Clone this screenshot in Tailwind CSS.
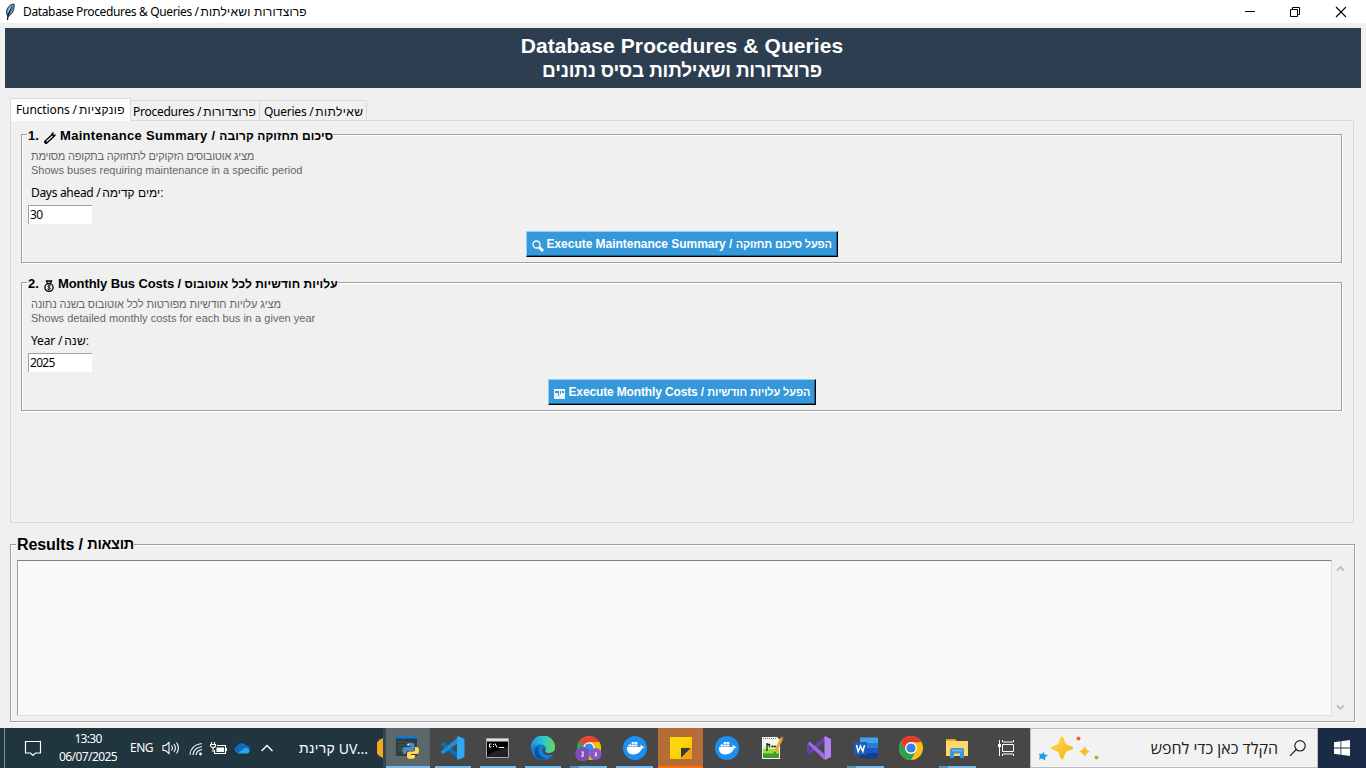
<!DOCTYPE html>
<html lang="en">
<head>
<meta charset="utf-8">
<title>Database Procedures &amp; Queries</title>
<script src="https://cdn.jsdelivr.net/npm/@tailwindcss/browser@4"></script>
</head>
<body class="flex h-[768px] w-[1366px] flex-col overflow-hidden bg-[#f0f0f0] font-['Noto_Sans','Open_Sans',sans-serif] text-[12px] text-black">

<!-- Title bar -->
<header class="flex h-[23px] shrink-0 items-center bg-white pl-[4px] whitespace-pre">
  <svg class="mr-[7px] h-[18px] w-[12px]" viewBox="0 0 12 18"><path d="M4 13.500C1 9 3 4 7.500 1.500L10 1C10.500 5 9.500 10 4.500 13.500Z" fill="#5e9bd6" stroke="#1c2733" stroke-width="1"/><path d="M8 3 4 12.500 3.500 17" fill="none" stroke="#111" stroke-width="1.200"/><path d="M7.500 3 4 9" stroke="#d3e6f7" stroke-width=".8"/></svg>
  <span class="tracking-[-0.36px]">Database Procedures &amp; Queries / </span><span class="-ml-px font-['Liberation_Sans',sans-serif] tracking-[0.21px]">פרוצדורות ושאילתות</span>
  <div class="ml-auto flex items-center pr-[19px]">
    <svg class="mr-[34px] size-[12px]" viewBox="0 0 12 12"><path d="M2 5.500h10" stroke="#000"/></svg>
    <svg class="mr-[34px] size-[12px]" viewBox="0 0 12 12" fill="none" stroke="#000"><path d="M1.500 3.500h7v7h-7zM3.500 3V1.500h7v7H9"/></svg>
    <svg class="size-[12px]" viewBox="0 0 12 12"><path d="M1 1l10 10M11 1 1 11" stroke="#000" stroke-width="1.100"/></svg>
  </div>
</header>

<!-- Banner -->
<div class="mx-[5px] mt-[5px] flex h-[60px] shrink-0 flex-col items-center bg-[#2c3e50] pt-[5px] pr-[2px] font-['Liberation_Sans',sans-serif] font-bold text-white">
  <div class="text-[21px] leading-[25px] tracking-[0.1px]">Database Procedures &amp; Queries</div>
  <div class="pt-px text-[19px] leading-[24px] tracking-[-0.19px]">פרוצדורות ושאילתות בסיס נתונים</div>
</div>

<!-- Notebook tabs -->
<nav class="ml-[10px] mt-[10px] flex h-[23px] shrink-0 items-end whitespace-pre">
  <div class="relative z-10 flex h-[23px] w-[121px] items-center border border-b-0 border-[#d9d9d9] bg-white pl-[5px]"><span class="tracking-[-0.12px]">Functions / </span><span class="-ml-px font-['Liberation_Sans',sans-serif] tracking-[0.37px]">פונקציות</span></div>
  <div class="flex h-[21px] w-[129px] items-center border-y border-r border-[#d9d9d9] pt-[2px] pl-[2px]"><span class="tracking-[-0.26px]">Procedures / </span><span class="-ml-px font-['Liberation_Sans',sans-serif] tracking-[0.22px]">פרוצדורות</span></div>
  <div class="flex h-[21px] w-[107px] items-center border-y border-r border-[#d9d9d9] pt-[2px] pl-[4px]"><span class="tracking-[-0.25px]">Queries / </span><span class="-ml-px font-['Liberation_Sans',sans-serif] tracking-[0.4px]">שאילתות</span></div>
</nav>

<!-- Functions page -->
<main class="-mt-px ml-[10px] flex h-[403px] w-[1344px] shrink-0 flex-col gap-[11px] border border-[#d9d9d9] px-[10px] pt-[5px] pr-[11px]">
  <fieldset class="h-[137px] border border-[#a0a0a0] pl-[6px] shadow-[1px_1px_0_white,inset_1px_1px_0_white]">
    <legend class="-ml-px flex h-[17px] items-center bg-[#f0f0f0] pt-[2px] font-['Liberation_Sans',sans-serif] text-[13px] font-bold whitespace-pre">
      <span class="w-[17px] pl-px">1.</span><svg class="mt-[4px] mr-[4px] size-[12px]" viewBox="0 0 12 12"><path d="M2 10 8.500 4" fill="none" stroke="#000" stroke-width="3.800" stroke-linecap="round"/><path d="M8 3.500V2l1.500-1.500M8.500 4H10l1.500-1.500" fill="none" stroke="#000" stroke-width="1.500"/><path d="M2.500 9.500 8.500 4" stroke="#e8e8e8" stroke-width="1.300"/></svg><span class="tracking-[0.31px]">Maintenance Summary / </span><span class="text-[12px] tracking-[0.08px]">סיכום תחזוקה קרובה</span>
    </legend>
    <div class="pt-[6px] pl-[3px] font-['Liberation_Sans',sans-serif] text-[11px] leading-[14px] text-[#666666]">
      <p class="tracking-[-0.2px]">מציג אוטובוסים הזקוקים לתחזוקה בתקופה מסוימת</p>
      <p>Shows buses requiring maintenance in a specific period</p>
    </div>
    <label class="mt-[8px] flex h-[16px] items-center pl-[3px] whitespace-pre"><span class="tracking-[-0.31px]">Days ahead / </span><span class="-ml-px font-['Liberation_Sans',sans-serif]">ימים קדימה:</span></label>
    <div class="mt-[4px] flex h-[19px] w-[64px] items-center border-t border-l border-[#a0a0a0] bg-white pl-px tracking-[-0.7px]">30</div>
    <button class="mx-auto mt-[7px] flex h-[26px] w-[312px] -translate-x-[3px] items-center border border-t-[#8fd0ff] border-r-black border-b-black border-l-[#8fd0ff] bg-[#3498db] pl-[5px] font-['Liberation_Sans',sans-serif] font-bold whitespace-pre text-white shadow-[inset_-1px_-1px_0_#1c5f8c]">
      <svg class="mt-[3px] mr-[4px] size-[12px]" viewBox="0 0 12 12" fill="none" stroke="#fff"><circle cx="4.500" cy="4.500" r="3.500" stroke-width="1.300"/><path d="m7 7 4 4" stroke-width="3"/></svg><span class="-ml-px tracking-[-0.03px]">Execute Maintenance Summary / </span><span class="text-[11px] tracking-[-0.2px]">הפעל סיכום תחזוקה</span>
    </button>
  </fieldset>

  <fieldset class="h-[137px] border border-[#a0a0a0] pl-[6px] shadow-[1px_1px_0_white,inset_1px_1px_0_white]">
    <legend class="-ml-px flex h-[17px] items-center bg-[#f0f0f0] pt-[2px] font-['Liberation_Sans',sans-serif] text-[13px] font-bold whitespace-pre">
      <span class="w-[17px] pl-px">2.</span><svg class="mt-[4px] mr-[4px] h-[12px] w-[10px]" viewBox="0 0 10 12" fill="none" stroke="#000"><path d="M2.500 1h5l-1 2.500h-3z" stroke-width="1.300"/><ellipse cx="5" cy="7.500" rx="4.100" ry="3.800" stroke-width="1.300"/><path d="M6.500 6C5.500 5 3.500 5.500 4 6.800 4.500 8 6.500 7.300 6.300 8.600 6 9.700 4.300 9.500 3.500 8.900M5 5v5.500" stroke-width=".9"/></svg><span class="tracking-[-0.1px]">Monthly Bus Costs / </span><span class="text-[12px] tracking-[0.06px]">עלויות חודשיות לכל אוטובוס</span>
    </legend>
    <div class="pt-[6px] pl-[3px] font-['Liberation_Sans',sans-serif] text-[11px] leading-[14px] text-[#666666]">
      <p class="tracking-[-0.08px]">מציג עלויות חודשיות מפורטות לכל אוטובוס בשנה נתונה</p>
      <p class="tracking-[0.02px]">Shows detailed monthly costs for each bus in a given year</p>
    </div>
    <label class="mt-[8px] flex h-[16px] items-center pl-[3px] whitespace-pre"><span class="tracking-[-0.15px]">Year / </span><span class="-ml-px font-['Liberation_Sans',sans-serif] tracking-[0.15px]">שנה:</span></label>
    <div class="mt-[4px] flex h-[19px] w-[64px] items-center border-t border-l border-[#a0a0a0] bg-white pl-px tracking-[-0.7px]">2025</div>
    <button class="mx-auto mt-[7px] flex h-[26px] w-[268px] -translate-x-[3px] items-center border border-t-[#8fd0ff] border-r-black border-b-black border-l-[#8fd0ff] bg-[#3498db] pl-[5px] font-['Liberation_Sans',sans-serif] font-bold whitespace-pre text-white shadow-[inset_-1px_-1px_0_#1c5f8c]">
      <svg class="mt-[3px] mr-[4px] h-[11px] w-[11px]" viewBox="0 0 11 11"><path d="M0 1h11v10H0z" fill="#e8f4fc"/><path d="M1 3h3v2H1zM4 3h1v5H4zM6 3h1v3H6zM8 3h2v2H8z" fill="#3498db"/><path d="M0 1h11v1H0z" fill="#fff"/></svg><span class="tracking-[-0.14px]">Execute Monthly Costs / </span><span class="text-[11px] tracking-[-0.13px]">הפעל עלויות חודשיות</span>
    </button>
  </fieldset>
</main>

<!-- Results -->
<fieldset class="mt-[12px] ml-[10px] h-[187px] w-[1345px] shrink-0 border border-[#a0a0a0] pl-[6px] shadow-[1px_1px_0_white,inset_1px_1px_0_white]">
  <legend class="-ml-px flex h-[19px] items-center bg-[#f0f0f0] pt-px pl-px font-['Liberation_Sans',sans-serif] text-[16px] font-bold whitespace-pre"><span class="tracking-[-0.08px]">Results / </span><span class="text-[14.500px] tracking-[-0.3px]">תוצאות</span></legend>
  <div class="mt-[6px] flex h-[156px]">
    <div class="w-[1315px] border border-t-[#808080] border-r-[#dcdcdc] border-b-[#dcdcdc] border-l-[#a0a0a0] bg-[#f8f9fa]"></div>
    <div class="flex w-[17px] flex-col items-center justify-between py-[5px]">
      <svg class="h-[7px] w-[9px]" viewBox="0 0 9 7"><path d="m1 5.500 3.500-3.500L8 5.500" fill="none" stroke="#bfbfbf" stroke-width="1.800"/></svg>
      <svg class="h-[7px] w-[9px]" viewBox="0 0 9 7"><path d="m1 1.500 3.500 3.500L8 1.500" fill="none" stroke="#bfbfbf" stroke-width="1.800"/></svg>
    </div>
  </div>
</fieldset>

<!-- Taskbar -->
<footer class="mt-auto flex h-[40px] shrink-0 items-stretch bg-[#474747] text-white">
  <div class="flex w-[386px] items-center bg-linear-to-r from-[#20363e] to-[#21353f]">
    <div class="ml-[4px] h-full w-px bg-[#84908f]"></div>
    <svg class="ml-[19px] size-[18px]" viewBox="0 0 18 18" fill="none" stroke="#fff" stroke-width="1.200"><path d="M1.500 2.500h15v11.500h-5L9 16.500 6.500 14h-5z"/></svg>
    <div class="ml-[15px] flex w-[62px] flex-col items-center text-[12px] leading-[18px]"><span class="tracking-[-0.72px]">13:30</span><span class="tracking-[-0.57px]">06/07/2025</span></div>
    <div class="ml-[11px] w-[24px] tracking-[-0.48px]">ENG</div>
    <svg class="ml-[8px] h-[16px] w-[18px]" viewBox="0 0 18 16" fill="none" stroke="#fff" stroke-width="1.100"><path d="M1 5.500h2.500L7 2.500v11l-3.500-3H1z"/><path d="M9.500 5.500q1.800 2.500 0 5M12 4q2.800 4 0 8M14.500 2.500q3.800 5.500 0 11"/></svg>
    <svg class="ml-[9px] size-[15px]" viewBox="0 0 15 15" fill="none" stroke="#fff" stroke-width="1.100"><path d="M1 14Q1.500 4 13 2.500" opacity=".8"/><path d="M4 14Q4.500 7 13 5.500M7 14Q7.500 9.500 13 8.500"/><circle cx="11.500" cy="13" r="1.400" fill="#fff" stroke="none"/></svg>
    <svg class="ml-[6px] h-[15px] w-[17px]" viewBox="0 0 17 15" fill="none" stroke="#fff" stroke-width="1.100"><path d="M7 4.500h8.500v8h-11V9M16.500 7v3"/><path d="M7 7h6.500v3.500H7z" fill="#fff"/><path d="M1.500 1v2M4.500 1v2M.5 3.500h5v1q0 2-2.500 2T.5 4.500zM3 6.500v4.500"/></svg>
    <svg class="ml-[7px] h-[12px] w-[17px]" viewBox="0 0 17 12"><path d="M3.500 11A3.500 3.500 0 0 1 3 4.200 5 5 0 0 1 12 3.500 4 4 0 0 1 14 11z" fill="#0f6cbd"/><path d="M3.500 11.500 11 6A3.200 3.200 0 0 1 14 11.500z" fill="#28a8ea"/></svg>
    <svg class="ml-[9px] h-[8px] w-[14px]" viewBox="0 0 14 8"><path d="m1.500 7 5.500-5.500L12.500 7" fill="none" stroke="#fff" stroke-width="1.400"/></svg>
    <div class="ml-[25px] flex w-[69px] items-center text-[14px] whitespace-pre"><span class="font-['Liberation_Sans',sans-serif] tracking-[0.3px]">קרינת</span><span class="tracking-[0.05px]"> UV...</span></div>
    <svg class="ml-[9px] h-[20px] w-[6px] shrink-0" viewBox="0 0 6 20"><path d="M6 0v20A10.500 10.500 0 0 1 6 0" fill="#f5a623"/></svg>
    <div class="ml-auto h-full w-[3px] bg-[#34474f]"></div>
  </div>

  <!-- Python -->
  <div class="flex w-[44px] items-center justify-center border-b-2 border-[#76b9ed] bg-[#5c6769]">
    <svg class="mt-[2px] h-[26px] w-[26px]" viewBox="0 0 26 26"><path d="M1 2h21v19H1z" fill="#333b40"/><path d="M1 1h21v2.500H1z" fill="#0a7bd0"/><path d="M3 7h4M8 7h4M3 10h7M3 13h5M3 16h6" stroke="#3c6a42" stroke-width="1.200"/><path d="M11.500 11V10q0-2.500 4-2.500t4 2.500v4q0 2-2 2h-4q-2.500 0-2.500 3H10q-2.500 0-2.500-3.500t2.500-3.500h5.500V11z" fill="#4b8bc8"/><path d="M20 12h1.500q2.500 0 2.500 3.500t-2.500 3.500H16v1h4v1.500q0 2.500-4 2.500t-4-2.500V18.500q0-2 2-2h4q2 0 2-2.500z" fill="#ffd94d"/><circle cx="13.300" cy="9.500" r=".8" fill="#fff"/><circle cx="18" cy="22" r=".8" fill="#fff"/></svg>
  </div>
  <!-- VS Code -->
  <div class="flex w-[45px] flex-col items-center"><div class="flex h-[38px] items-center pt-[2px]"><svg class="size-[24px]" viewBox="0 0 24 24"><path d="M0 7.500 2.500 6 18 18v5.500L0 9z" fill="#0a70b8"/><path d="M0 16.500 2.500 18 18 6V.5L0 15z" fill="#1a8fd6"/><path d="M17 0l6.500 3v18L17 24l-1-1.500V1.500z" fill="#32a8f0"/></svg></div><div class="h-[2px] w-[36px] bg-[#76b9ed]"></div></div>
  <!-- Command prompt -->
  <div class="flex w-[45px] flex-col items-center"><div class="flex h-[38px] items-center pt-[2px]"><svg class="h-[20px] w-[23px]" viewBox="0 0 23 20"><path d="M.5.5h22v19H.5z" fill="#000" stroke="#aaa"/><path d="M1 1h21v2.500H1z" fill="#ddd"/><path d="M3 16 22 8v11H1z" fill="#222"/><path d="M5.500 6H3.500v3h2M7.500 6v1M7.500 8v1M9 5.500l2 4M13 9.500h5" fill="none" stroke="#fff"/></svg></div><div class="h-[2px] w-[36px] bg-[#76b9ed]"></div></div>
  <!-- Edge -->
  <div class="flex w-[46px] flex-col items-center"><div class="flex h-[38px] items-center pt-[2px]"><svg class="size-[24px]" viewBox="0 0 24 24"><defs><linearGradient id="eg"><stop offset="0" stop-color="#1e95e0"/><stop offset=".5" stop-color="#2fc2cf"/><stop offset="1" stop-color="#62dc55"/></linearGradient></defs><circle cx="12" cy="12" r="12" fill="#1380d2"/><path d="M0 11A12 12 0 0 1 24 11.500c0 4-3.500 5.500-6.500 5.500-3.500 0-4-1.500-3-3 1.500-2.500-.5-5.500-4-5.500C6 8 2 9 0 13z" fill="url(#eg)"/><path d="M8.500 10c-3.500 5 0 12 8 12.500A12 12 0 0 1 6 22C2 17 3 11 8.500 10z" fill="#0b4f9e"/><path d="M12 12.500c.5-1 2.500-.5 2.500 1.500-1 1.500-.5 3 3 3 2 0 4-.5 6.500-2.500l-.8 3q-3 2-6.500 1.800c-4-.3-6-3.500-4.700-6.800z" fill="#474747"/></svg></div><div class="h-[2px] w-[36px] bg-[#76b9ed]"></div></div>
  <!-- Chrome with profile badges -->
  <div class="flex w-[45px] flex-col items-center"><div class="flex h-[38px] items-center pt-[2px]"><svg class="h-[25px] w-[27px]" viewBox="0 0 27 25"><circle cx="14" cy="12" r="12" fill="#2da94f"/><path d="M14 12 3.600 6A12 12 0 0 1 24.400 6z" fill="#ea4335"/><path d="M14 12V6h10.400A12 12 0 0 1 14 24z" fill="#fbbc05"/><circle cx="14" cy="12" r="5.800" fill="#fff"/><circle cx="14" cy="12" r="4.500" fill="#4285f4"/><circle cx="20.500" cy="18" r="6" fill="#8659c5"/><circle cx="7.500" cy="18" r="7.300" fill="#7a4fb8"/><path d="M6.500 16H8v4H6M20 17h1.200v2.700h-1.500" fill="none" stroke="#fff" stroke-width="1.100"/></svg></div><div class="flex h-[2px] w-[37px] bg-[#76b9ed]"><div class="w-[9px] bg-[#5b8fb5]"></div></div></div>
  <!-- Docker -->
  <div class="flex w-[47px] flex-col items-center"><div class="flex h-[38px] items-center pt-[2px]"><svg class="size-[24px]" viewBox="0 0 24 24"><circle cx="12" cy="12" r="12" fill="#1d8fee"/><path d="M4 11h13.500q.5-1 0-2.500 1.500.7 1.800 2 1.200-.3 2.200.3-.7 1.500-2.500 1.500C17.500 16.500 14.500 18.500 10.500 18.500 5.500 18.500 3.500 15.500 4 11zM5.500 8.500h2.700v2H5.500zM8.600 8.500h2.700v2H8.600zM11.700 8.500h2.700v2h-2.700zM8.600 6h2.700v2H8.600zM11.700 6h2.700v2h-2.700z" fill="#fff"/></svg></div><div class="h-[2px] w-[37px] bg-[#76b9ed]"></div></div>
  <!-- Sticky notes -->
  <div class="flex w-[45px] items-center justify-center border-b-2 border-[#ff7012] bg-[#b66c37]"><svg class="mt-[2px] size-[22px]" viewBox="0 0 22 22"><path d="M0 0h22v22H0z" fill="#ffd60a"/><path d="M22 0 0 22h22z" fill="#f7c600" opacity=".5"/><path d="M11 21V11h10z" fill="#3b3a39"/><path d="M22 11 11 22h11z" fill="#f2a60c"/></svg></div>
  <!-- Docker Desktop -->
  <div class="flex w-[47px] justify-center pt-[8px]"><svg class="size-[24px]" viewBox="0 0 24 24"><circle cx="12" cy="12" r="12" fill="#1d8fee"/><path d="M4 11h13.500q.5-1 0-2.500 1.500.7 1.800 2 1.200-.3 2.200.3-.7 1.500-2.500 1.500C17.500 16.500 14.500 18.500 10.500 18.500 5.500 18.500 3.500 15.500 4 11zM5.500 8.500h2.700v2H5.500zM8.600 8.500h2.700v2H8.600zM11.700 8.500h2.700v2h-2.700zM8.600 6h2.700v2H8.600zM11.700 6h2.700v2h-2.700z" fill="#fff"/></svg></div>
  <!-- Notepad++ -->
  <div class="flex w-[45px] justify-center pt-[8px]"><svg class="h-[24px] w-[24px]" viewBox="0 0 24 24"><path d="M1 1h15l3 3v19H1z" fill="#f5f5f0"/><path d="M2 9h16v5H2z" fill="#dff5c0"/><path d="M2 13h16v5H2z" fill="#8fe03b"/><path d="M2 17.500h16V22H2z" fill="#3f9b2c"/><path d="M2 2.500h13" stroke="#777" stroke-dasharray="1 1"/><path d="M6 7v8M6 8.500h2.500v3M10.500 10.500h2M11.500 9.500v2M13 10.500h2" fill="none" stroke="#222" stroke-width="1.300"/><path d="m13 18 .5-4 6-12.500 2.500 1.500-6 12.500z" fill="#efa62c"/><path d="m19.500 1.500.8-1.500 2.500 1.500-.8 1.500z" fill="#d9534f"/><path d="m13 18 .3-2.500 1.500 1z" fill="#333"/></svg></div>
  <!-- Visual Studio -->
  <div class="flex w-[47px] justify-center pt-[8px]"><svg class="size-[24px]" viewBox="0 0 24 24"><path d="M0 6.500 2.500 5.500 5 7.500v9L2.500 18.500 0 17.500z" fill="#6a3fb0"/><path d="M2.500 7.500v9L7 12z" fill="#474747"/><path d="M2.500 18.500 18 5.500V0L.5 16z" fill="#6a3fb0"/><path d="M17.500 0 24 3v18l-6.500 3z" fill="#b184f0"/><path d="M2.500 5.500 17.500 18v6L1 8z" fill="#9a6be0"/></svg></div>
  <!-- Word -->
  <div class="flex w-[47px] flex-col items-center"><div class="flex h-[38px] items-center pt-[2px]"><svg class="h-[22px] w-[24px]" viewBox="0 0 24 22"><path d="M6 .5h18v5.500H6z" fill="#41a5ee"/><path d="M6 6h18v5H6z" fill="#2b7cd3"/><path d="M6 11h18v5H6z" fill="#185abd"/><path d="M6 16h18v5.500H6z" fill="#103f91"/><path d="M0 5h13v12.500H0z" fill="#1a5cbe"/><path d="m2.500 8 1.700 6.500L6.500 9l2.300 5.500L10.500 8" fill="none" stroke="#fff" stroke-width="1.500"/></svg></div><div class="flex h-[2px] w-[37px] bg-[#76b9ed]"><div class="w-[9px] bg-[#5b8fb5]"></div></div></div>
  <!-- Chrome -->
  <div class="flex w-[44px] justify-center pt-[8px]"><svg class="size-[24px]" viewBox="0 0 24 24"><circle cx="12" cy="12" r="12" fill="#fbc116"/><path d="M12 12V6.200H22.500A12 12 0 0 0 1.600 6L7 15z" fill="#e33b2e"/><path d="M1.600 6A12 12 0 0 0 12 24l5-9-5 3-5-3z" fill="#2ba24c"/><circle cx="12" cy="12" r="5.900" fill="#fff"/><circle cx="12" cy="12" r="4.600" fill="#3b7de9"/></svg></div>
  <!-- File Explorer -->
  <div class="flex w-[48px] flex-col items-center"><div class="flex h-[38px] items-center pt-[2px]"><svg class="h-[20px] w-[22px]" viewBox="0 0 22 20"><path d="M0 1h9l1.500 2H22v15H0z" fill="#ffd76a"/><path d="M0 1h9l1 1.700H0z" fill="#e0a010"/><path d="M4 20v-8q0-2 2-2h10q2 0 2 2v8h-4v-4.500H8V20z" fill="#3a96dd"/><path d="M6 12.500h10" stroke="#73b8ee" stroke-width="1.500"/></svg></div><div class="flex h-[2px] w-[37px] bg-[#76b9ed]"><div class="w-[9px] bg-[#5b8fb5]"></div></div></div>
  <!-- Task view -->
  <div class="flex w-[49px] justify-center pt-[12px] pl-px"><svg class="h-[16px] w-[17px]" viewBox="0 0 17 16" fill="none" stroke="#fff"><path d="M4.500 4.500h11v7h-11zM4.500 0v2h11V0M4.500 16v-2h11v2M1.500 0v16"/><path d="M0 4h3v3H0z" fill="#fff" stroke="none"/></svg></div>

  <!-- Search -->
  <div class="flex w-[288px] items-center border border-[#bcbcbc] bg-[#f2f2f2] text-[#222]">
    <svg class="ml-[7px] h-[26px] w-[62px]" viewBox="0 0 62 26"><defs><linearGradient id="sg" x2="1" y2="1"><stop offset="0" stop-color="#ffdc4a"/><stop offset="1" stop-color="#f5b014"/></linearGradient></defs><path d="M24 1.500c2 0 2.500 6 4 7.500s7 2 7 4-5.500 2.500-7 4-2 7.500-4 7.500-2.500-6-4-7.500-7-2-7-4 5.500-2.500 7-4 2-7.500 4-7.500z" fill="url(#sg)"/><path d="M46.500 11q1 4 5.500 5.500-4.500 1.500-5.500 5.500-1-4-5.500-5.500 4.500-1.500 5.500-5.500z" fill="#f9bf26"/><path d="m5.500 16.500 1 3 3.500.5-2.700 2-.3 3.500-3-2-3 1 .8-3L1 18.800l3.200.2z" fill="#1aa0e8"/><circle cx="40.500" cy="3.500" r="2" fill="#f0642d"/><circle cx="58.500" cy="22.500" r="2" fill="#8cc63f"/></svg>
    <span class="ml-auto font-['Open_Sans','Liberation_Sans',sans-serif] text-[16px]">הקלד כאן כדי לחפש</span>
    <svg class="mr-[10px] ml-[11px] size-[18px]" viewBox="0 0 18 18" fill="none" stroke="#222" stroke-width="1.200"><circle cx="11" cy="6.800" r="5.200"/><path d="M7.300 10.500 1 16.800"/></svg>
  </div>
  <div class="flex w-[48px] items-center justify-center bg-[#1a2a47]"><svg class="size-[16px]" viewBox="0 0 16 16" fill="#fff"><path d="M0 2.200 6.500 1.300V7.600H0zM7.300 1.200 16 0v7.600H7.300zM0 8.400h6.500v6.300L0 13.800zM7.300 8.400H16V16l-8.700-1.200z"/></svg></div>
</footer>
</body>
</html>
